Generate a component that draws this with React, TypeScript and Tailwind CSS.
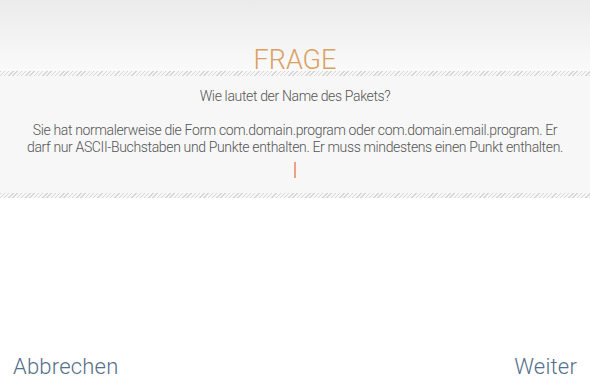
export default function App() {
  const stripe =
    "h-[5px] bg-[repeating-linear-gradient(135deg,#d6d6d6_0px,#d6d6d6_1px,transparent_1px,transparent_3px)]";
  return (
    <div className="w-[590px] h-[383px] bg-white flex flex-col font-['Roboto',sans-serif]">
      {/* header */}
      <div className="h-[71px] bg-gradient-to-b from-[#ebebeb] to-[#fafafa] flex items-end justify-center">
        <h1 className="text-[27px] font-light leading-none text-[#dba062] mb-[-3px]">
          FRAGE
        </h1>
      </div>
      <div className={"bg-[#f7f7f7] " + stripe}></div>

      {/* body */}
      <div className="bg-[#f7f7f7] h-[117px] px-[26px] pt-[12px] flex flex-col items-center text-center text-[14px] font-light tracking-[-0.35px] leading-[17px] text-[#555]">
        <p>Wie lautet der Name des Pakets?</p>
        <p className="mt-[17px]">
          Sie hat normalerweise die Form com.domain.program oder
          com.domain.email.program. Er darf nur ASCII-Buchstaben und Punkte
          enthalten. Er muss mindestens einen Punkt enthalten.
        </p>
        <div className="mt-[6px] w-[1.5px] h-[16px] bg-[#f0a080]"></div>
      </div>
      <div className={"bg-[#f7f7f7] " + stripe}></div>

      {/* footer */}
      <div className="flex-1 flex items-end justify-between px-[13px] pb-[5px]">
        <button className="text-[22px] font-light text-[#55708a] leading-none tracking-[0.2px]">
          Abbrechen
        </button>
        <button className="text-[22px] font-light text-[#55708a] leading-none tracking-[0.2px]">
          Weiter
        </button>
      </div>
    </div>
  );
}
